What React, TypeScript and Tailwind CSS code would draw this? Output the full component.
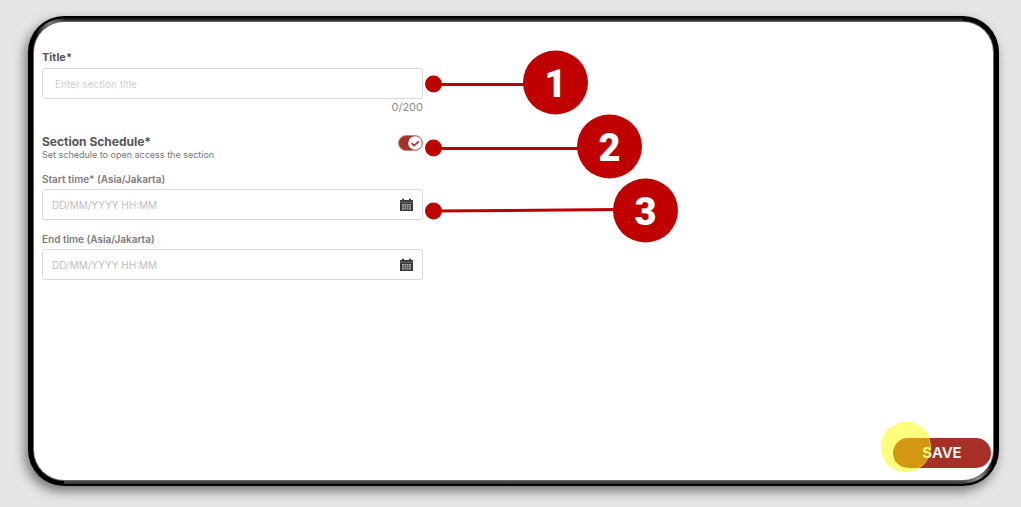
import { useState } from "react";

type DateFieldProps = { id: string; label: string };

function CalendarIcon() {
  return (
    <svg viewBox="0 0 13 14" className="h-[14px] w-[13px]" aria-hidden="true">
      <path fill="#383838" d="M2 .7h2V2h5V.7h2V2h2v11H0V2h2z" />
      <path stroke="#fff" strokeWidth="0.8" d="M0 4.2h13" opacity="0.35" />
      <path
        fill="#ddd"
        d="M2 6h2v1.5H2zM4.5 6h1.8v1.5H4.5zM6.8 6h1.8v1.5H6.8zM9.1 6H11v1.5H9.1zM2 8.2h2v1.4H2zM4.5 8.2h1.8v1.4H4.5zM6.8 8.2h1.8v1.4H6.8zM9.1 8.2H11v1.4H9.1zM2 10.3h2v1.2H2zM4.5 10.3h1.8v1.2H4.5zM6.8 10.3h1.8v1.2H6.8zM9.1 10.3H11v1.2H9.1z"
        opacity="0.75"
      />
    </svg>
  );
}

function DateField({ id, label }: DateFieldProps) {
  return (
    <div>
      <label htmlFor={id} className="block text-[10px] leading-[12px] font-semibold text-[#7c7c7c]">
        {label}
      </label>
      <div className="mt-1 flex h-[31px] items-center rounded-[3px] border border-[#d9d9d9] px-[9px]">
        <input
          id={id}
          type="text"
          placeholder="DD/MM/YYYY HH:MM"
          className="min-w-0 flex-1 bg-transparent text-[10px] leading-[14px] outline-none placeholder:text-[#c0c0c0]"
        />
        <button type="button" aria-label={"Pick " + label}>
          <CalendarIcon />
        </button>
      </div>
    </div>
  );
}

const callouts = [
  { n: "1", dot: [399, 62], end: [495, 62], cx: 521, cy: 61 },
  { n: "2", dot: [399, 126], end: [550, 126], cx: 575, cy: 125 },
  { n: "3", dot: [399, 189], end: [585, 187], cx: 611, cy: 189 },
];

function Callouts() {
  return (
    <svg
      width="660"
      height="240"
      className="pointer-events-none absolute top-0 left-0 font-['Roboto',sans-serif]"
    >
      {callouts.map((c) => (
        <g key={c.n} fill="#c00000">
          <line x1={c.dot[0]} y1={c.dot[1] + (c.n === "3" ? 0 : 0.5)} x2={c.end[0]} y2={c.end[1] + 0.5} stroke="#c00000" strokeWidth="3" />
          <circle cx={c.dot[0] + 0.5} cy={c.dot[1]} r="8.5" />
          <ellipse cx={c.cx + 0.5} cy={c.cy - 0.5} rx="32.5" ry="32" />
          <text
            x={c.cx + 0.5}
            y={c.cy + 14}
            textAnchor="middle"
            fontSize="38"
            fontWeight="900"
            fill="#fff"
          >
            {c.n}
          </text>
        </g>
      ))}
    </svg>
  );
}

export default function App() {
  const [title, setTitle] = useState("");
  const [scheduled, setScheduled] = useState(true);

  return (
    <div className="flex min-h-screen bg-[#e6e6e6] pt-4 pr-[22px] pb-[21px] pl-7 font-['Inter',sans-serif]">
      <div className="relative flex flex-1 rounded-[36px] bg-black p-[6px] shadow-[-3px_5px_12px_rgba(0,0,0,0.5)]">
        <div className="absolute inset-x-9 top-[2px] h-1 bg-linear-to-b from-[#111] to-[#4a4a4a]" />
        <div className="absolute inset-x-9 bottom-[2px] h-1 bg-linear-to-b from-[#666] to-[#2c2c2c]" />
        <svg className="absolute top-0 left-0 size-9" viewBox="0 0 36 36" fill="none">
          <defs>
            <linearGradient id="shine-a" x1="0" y1="1" x2="1" y2="0">
              <stop offset="0.3" stopColor="#000" />
              <stop offset="0.72" stopColor="#888" />
              <stop offset="1" stopColor="#333" />
            </linearGradient>
          </defs>
          <path d="M4 36A32 32 0 0 1 36 4" stroke="url(#shine-a)" strokeWidth="3" />
        </svg>
        <svg className="absolute right-0 bottom-0 size-9" viewBox="0 0 36 36" fill="none">
          <defs>
            <linearGradient id="shine-b" x1="0" y1="1" x2="1" y2="0">
              <stop offset="0" stopColor="#444" />
              <stop offset="0.3" stopColor="#999" />
              <stop offset="0.75" stopColor="#000" />
            </linearGradient>
          </defs>
          <path d="M0 32A32 32 0 0 0 32 0" stroke="url(#shine-b)" strokeWidth="3" />
        </svg>

        <main className="relative flex flex-1 flex-col rounded-[30px] bg-white pt-7 pb-3 pl-2 shadow-[0_0_0_1px_#666]">
          <form id="section-form" className="w-[381px] max-w-full" onSubmit={(e) => e.preventDefault()}>
            <label htmlFor="title" className="block text-[11px] leading-[14px] font-bold text-[#555]">
              Title*
            </label>
            <input
              id="title"
              type="text"
              maxLength={200}
              value={title}
              onChange={(e) => setTitle(e.target.value)}
              placeholder="Enter section title"
              className="mt-1 block h-[31px] w-full rounded-[3px] border border-[#d9d9d9] px-3 text-[10px] outline-none placeholder:text-[#cfcfcf]"
            />
            <p className="mt-[1px] text-right text-[11px] leading-[14px] text-[#8c8c8c]">{title.length}/200</p>

            <div className="mt-[21px] flex items-start justify-between">
              <div>
                <label htmlFor="schedule" className="block text-[12px] leading-[14px] font-bold text-[#555]">
                  Section Schedule*
                </label>
                <p className="text-[9px] leading-[11px] text-[#757575]">Set schedule to open access the section</p>
              </div>
              <label className="flex">
                <input
                  id="schedule"
                  type="checkbox"
                  role="switch"
                  checked={scheduled}
                  onChange={(e) => setScheduled(e.target.checked)}
                  className="peer sr-only"
                />
                <span className="flex h-4 w-[25px] justify-start rounded-full border border-[#c98680] bg-[#a43026] peer-checked:justify-end">
                  <svg viewBox="0 0 14 14" className="size-[14px]" aria-hidden="true">
                    <circle cx="7" cy="7" r="6.8" fill="#fff" />
                    <path d="M3.6 7.2l2.5 2.4 4.6-4.2" fill="none" stroke="#a43026" strokeWidth="1.6" />
                  </svg>
                </span>
              </label>
            </div>

            <div className="mt-[13px] flex flex-col gap-[13px]">
              <DateField id="start" label="Start time* (Asia/Jakarta)" />
              <DateField id="end" label="End time (Asia/Jakarta)" />
            </div>
          </form>

          <div className="mt-auto flex justify-end pr-[2px]">
            <div className="relative">
              <button
                type="submit"
                form="section-form"
                className="h-[30px] w-[98px] rounded-full bg-[#a63026] text-[15px] leading-5 font-semibold text-white"
              >
                SAVE
              </button>
              <span className="pointer-events-none absolute -top-4 -left-3 size-[50px] rounded-full border border-[#ffff00]/40 bg-[#ffff00]/50" />
            </div>
          </div>

          <Callouts />
        </main>
      </div>
    </div>
  );
}
